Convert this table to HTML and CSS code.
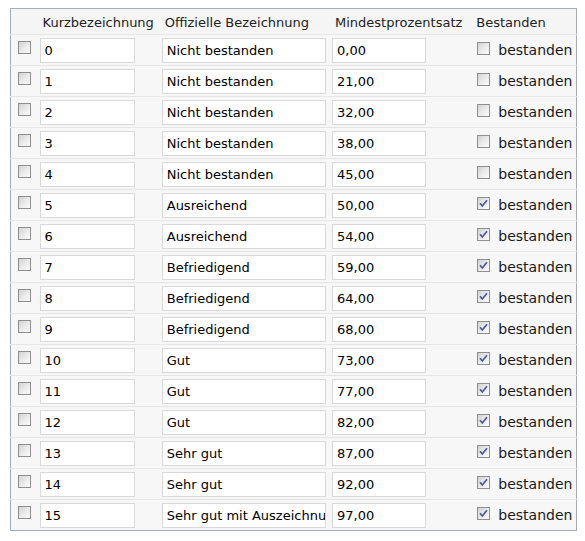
FILE: index.html
```html
<!DOCTYPE html>
<html lang="de">
<head>
<meta charset="utf-8">
<title>Noten</title>
<link rel="stylesheet" href="styles.css">
</head>
<body>
<table class="grid">
  <colgroup>
    <col class="c1"><col class="c2"><col class="c3"><col class="c4"><col class="c5">
  </colgroup>
  <thead>
    <tr>
      <th></th>
      <th class="h-in">Kurzbezeichnung</th>
      <th class="h-in">Offizielle Bezeichnung</th>
      <th class="h-in">Mindestprozentsatz</th>
      <th class="h-cb">Bestanden</th>
    </tr>
  </thead>
  <tbody>
    <tr><td class="sel"><span class="cb"></span></td><td><div class="field f-short">0</div></td><td><div class="field f-long">Nicht bestanden</div></td><td><div class="field f-pct">0,00</div></td><td class="pass"><span class="cb"></span><span class="lbl">bestanden</span></td></tr>
    <tr><td class="sel"><span class="cb"></span></td><td><div class="field f-short">1</div></td><td><div class="field f-long">Nicht bestanden</div></td><td><div class="field f-pct">21,00</div></td><td class="pass"><span class="cb"></span><span class="lbl">bestanden</span></td></tr>
    <tr><td class="sel"><span class="cb"></span></td><td><div class="field f-short">2</div></td><td><div class="field f-long">Nicht bestanden</div></td><td><div class="field f-pct">32,00</div></td><td class="pass"><span class="cb"></span><span class="lbl">bestanden</span></td></tr>
    <tr><td class="sel"><span class="cb"></span></td><td><div class="field f-short">3</div></td><td><div class="field f-long">Nicht bestanden</div></td><td><div class="field f-pct">38,00</div></td><td class="pass"><span class="cb"></span><span class="lbl">bestanden</span></td></tr>
    <tr><td class="sel"><span class="cb"></span></td><td><div class="field f-short">4</div></td><td><div class="field f-long">Nicht bestanden</div></td><td><div class="field f-pct">45,00</div></td><td class="pass"><span class="cb"></span><span class="lbl">bestanden</span></td></tr>
    <tr><td class="sel"><span class="cb"></span></td><td><div class="field f-short">5</div></td><td><div class="field f-long">Ausreichend</div></td><td><div class="field f-pct">50,00</div></td><td class="pass"><span class="cb"><svg viewBox="0 0 11 11" class="tick"><path d="M2 5.2 L4.3 8 L9 2.2"/></svg></span><span class="lbl">bestanden</span></td></tr>
    <tr><td class="sel"><span class="cb"></span></td><td><div class="field f-short">6</div></td><td><div class="field f-long">Ausreichend</div></td><td><div class="field f-pct">54,00</div></td><td class="pass"><span class="cb"><svg viewBox="0 0 11 11" class="tick"><path d="M2 5.2 L4.3 8 L9 2.2"/></svg></span><span class="lbl">bestanden</span></td></tr>
    <tr><td class="sel"><span class="cb"></span></td><td><div class="field f-short">7</div></td><td><div class="field f-long">Befriedigend</div></td><td><div class="field f-pct">59,00</div></td><td class="pass"><span class="cb"><svg viewBox="0 0 11 11" class="tick"><path d="M2 5.2 L4.3 8 L9 2.2"/></svg></span><span class="lbl">bestanden</span></td></tr>
    <tr><td class="sel"><span class="cb"></span></td><td><div class="field f-short">8</div></td><td><div class="field f-long">Befriedigend</div></td><td><div class="field f-pct">64,00</div></td><td class="pass"><span class="cb"><svg viewBox="0 0 11 11" class="tick"><path d="M2 5.2 L4.3 8 L9 2.2"/></svg></span><span class="lbl">bestanden</span></td></tr>
    <tr><td class="sel"><span class="cb"></span></td><td><div class="field f-short">9</div></td><td><div class="field f-long">Befriedigend</div></td><td><div class="field f-pct">68,00</div></td><td class="pass"><span class="cb"><svg viewBox="0 0 11 11" class="tick"><path d="M2 5.2 L4.3 8 L9 2.2"/></svg></span><span class="lbl">bestanden</span></td></tr>
    <tr><td class="sel"><span class="cb"></span></td><td><div class="field f-short">10</div></td><td><div class="field f-long">Gut</div></td><td><div class="field f-pct">73,00</div></td><td class="pass"><span class="cb"><svg viewBox="0 0 11 11" class="tick"><path d="M2 5.2 L4.3 8 L9 2.2"/></svg></span><span class="lbl">bestanden</span></td></tr>
    <tr><td class="sel"><span class="cb"></span></td><td><div class="field f-short">11</div></td><td><div class="field f-long">Gut</div></td><td><div class="field f-pct">77,00</div></td><td class="pass"><span class="cb"><svg viewBox="0 0 11 11" class="tick"><path d="M2 5.2 L4.3 8 L9 2.2"/></svg></span><span class="lbl">bestanden</span></td></tr>
    <tr><td class="sel"><span class="cb"></span></td><td><div class="field f-short">12</div></td><td><div class="field f-long">Gut</div></td><td><div class="field f-pct">82,00</div></td><td class="pass"><span class="cb"><svg viewBox="0 0 11 11" class="tick"><path d="M2 5.2 L4.3 8 L9 2.2"/></svg></span><span class="lbl">bestanden</span></td></tr>
    <tr><td class="sel"><span class="cb"></span></td><td><div class="field f-short">13</div></td><td><div class="field f-long">Sehr gut</div></td><td><div class="field f-pct">87,00</div></td><td class="pass"><span class="cb"><svg viewBox="0 0 11 11" class="tick"><path d="M2 5.2 L4.3 8 L9 2.2"/></svg></span><span class="lbl">bestanden</span></td></tr>
    <tr><td class="sel"><span class="cb"></span></td><td><div class="field f-short">14</div></td><td><div class="field f-long">Sehr gut</div></td><td><div class="field f-pct">92,00</div></td><td class="pass"><span class="cb"><svg viewBox="0 0 11 11" class="tick"><path d="M2 5.2 L4.3 8 L9 2.2"/></svg></span><span class="lbl">bestanden</span></td></tr>
    <tr><td class="sel"><span class="cb"></span></td><td><div class="field f-short">15</div></td><td><div class="field f-long">Sehr gut mit Auszeichnung</div></td><td><div class="field f-pct">97,00</div></td><td class="pass"><span class="cb"><svg viewBox="0 0 11 11" class="tick"><path d="M2 5.2 L4.3 8 L9 2.2"/></svg></span><span class="lbl">bestanden</span></td></tr>
  </tbody>
</table>
</body>
</html>
```

FILE: styles.css
```css
html, body {
  margin: 0;
  padding: 0;
  background: #ffffff;
}

body {
  font-family: "DejaVu Sans", Verdana, sans-serif;
  color: #111111;
}

.grid {
  margin: 8px 0 0 10px;
  border-collapse: collapse;
  border: 1px solid #a3adba;
  table-layout: fixed;
  width: 567px;
}

.c1 { width: 25px; }
.c2 { width: 122px; }
.c3 { width: 170px; }
.c4 { width: 144px; }
.c5 { width: 104px; }

.grid th {
  height: 19px;
  padding: 6px 0 0 0;
  background: #f5f5f5;
  border-bottom: 1px solid #e6e6e6;
  font-weight: normal;
  font-size: 13px;
  line-height: 15px;
  color: #222222;
  text-align: left;
  vertical-align: top;
  white-space: nowrap;
}

.grid th.h-in {
  padding-left: 7px;
}

.grid th.h-cb {
  padding-left: 4px;
}

.grid td {
  height: 30px;
  padding: 0;
  background: #f7f7f7;
  border-bottom: 1px solid #e6e6e6;
  vertical-align: top;
}

.grid tbody tr:last-child td {
  border-bottom: none;
}

.field {
  box-sizing: border-box;
  height: 25px;
  margin: 3px 0 0 4px;
  padding: 0 4px;
  border: 1px solid #d9d9d9;
  background: #ffffff;
  font-size: 13px;
  line-height: 23px;
  color: #000000;
  white-space: nowrap;
  overflow: hidden;
}

.f-short { width: 95px; }
.f-long { width: 164px; }
.f-pct { width: 94px; }

.cb {
  display: block;
  box-sizing: border-box;
  width: 13px;
  height: 13px;
  border: 1px solid #8f8f8f;
  background: linear-gradient(135deg, #d2d2d2 0%, #ececec 55%, #fbfbfb 100%);
}

.sel .cb {
  margin: 6px 0 0 7px;
}

.pass .cb {
  display: inline-block;
  vertical-align: top;
  margin: 7px 0 0 5px;
}

.lbl {
  display: inline-block;
  vertical-align: top;
  margin: 7px 0 0 8px;
  font-size: 14px;
  line-height: 16px;
  color: #1a1a1a;
}

.tick {
  display: block;
  width: 11px;
  height: 11px;
  fill: none;
  stroke: #4a5aa0;
  stroke-width: 1.7;
}
```
